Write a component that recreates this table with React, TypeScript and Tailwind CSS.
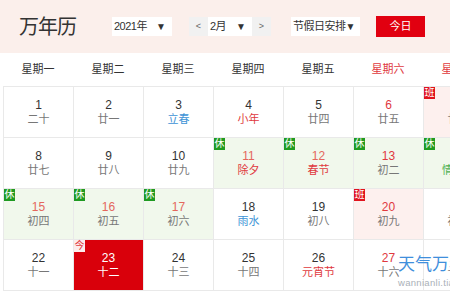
import React from "react";

type Day = {
  n: number | string;
  lunar: string;
  numColor?: string;
  lunarColor?: string;
  bg?: string;
  badge?: "休" | "班" | "今";
  today?: boolean;
};

const RED = "text-[#e0393e]";
const BLUE = "text-[#3d93d6]";
const GRAY = "text-[#777]";
const SOFTRED = "text-[#e4675d]";
const GREENBG = "bg-[#f1f8ec]";
const PINKBG = "bg-[#fdf0ee]";

const weeks: Day[][] = [
  [
    { n: 1, lunar: "二十" },
    { n: 2, lunar: "廿一" },
    { n: 3, lunar: "立春", lunarColor: BLUE },
    { n: 4, lunar: "小年", lunarColor: RED },
    { n: 5, lunar: "廿四" },
    { n: 6, lunar: "廿五", numColor: RED },
    { n: 7, lunar: "廿六", numColor: RED, bg: PINKBG, badge: "班" },
  ],
  [
    { n: 8, lunar: "廿七" },
    { n: 9, lunar: "廿八" },
    { n: 10, lunar: "廿九" },
    { n: 11, lunar: "除夕", numColor: SOFTRED, lunarColor: RED, bg: GREENBG, badge: "休" },
    { n: 12, lunar: "春节", numColor: SOFTRED, lunarColor: RED, bg: GREENBG, badge: "休" },
    { n: 13, lunar: "初二", numColor: RED, bg: GREENBG, badge: "休" },
    { n: 14, lunar: "情人节", numColor: RED, lunarColor: "text-[#4caf50]", bg: GREENBG, badge: "休" },
  ],
  [
    { n: 15, lunar: "初四", numColor: SOFTRED, bg: GREENBG, badge: "休" },
    { n: 16, lunar: "初五", numColor: SOFTRED, bg: GREENBG, badge: "休" },
    { n: 17, lunar: "初六", numColor: SOFTRED, bg: GREENBG, badge: "休" },
    { n: 18, lunar: "雨水", lunarColor: BLUE },
    { n: 19, lunar: "初八" },
    { n: 20, lunar: "初九", numColor: RED, bg: PINKBG, badge: "班" },
    { n: 21, lunar: "初十", numColor: RED },
  ],
  [
    { n: 22, lunar: "十一" },
    { n: 23, lunar: "十二", today: true, badge: "今" },
    { n: 24, lunar: "十三" },
    { n: 25, lunar: "十四" },
    { n: 26, lunar: "元宵节", lunarColor: RED },
    { n: 27, lunar: "十六", numColor: RED },
    { n: 28, lunar: "十七", numColor: RED },
  ],
];

const weekdays = ["星期一", "星期二", "星期三", "星期四", "星期五", "星期六", "星期日"];

const Badge: React.FC<{ kind: "休" | "班" | "今" }> = ({ kind }) => {
  const cls =
    kind === "休"
      ? "bg-[#1f9a22] text-white"
      : kind === "班"
      ? "bg-[#e0141e] text-white"
      : "bg-[#fdecec] text-[#e0393e]";
  return (
    <span
      className={`absolute left-0 top-0 w-[11px] h-[12px] flex items-center justify-center text-[10px] leading-none ${cls}`}
    >
      {kind}
    </span>
  );
};

const Cell: React.FC<{ d: Day }> = ({ d }) => {
  const bg = d.today ? "bg-[#d9000b]" : d.bg ?? "bg-white";
  const num = d.today ? "text-white" : d.numColor ?? "text-[#333]";
  const lunar = d.today ? "text-white" : d.lunarColor ?? GRAY;
  return (
    <div
      className={`relative h-[51px] border-r border-b border-[#e9e9e9] flex flex-col items-center justify-center ${bg}`}
    >
      {d.badge && <Badge kind={d.badge} />}
      <span className={`text-[12px] leading-[14px] ${num}`}>{d.n}</span>
      <span className={`text-[11px] leading-[15px] whitespace-nowrap ${lunar}`}>{d.lunar}</span>
    </div>
  );
};

const Select: React.FC<{ label: string; w: string }> = ({ label, w }) => (
  <div
    className={`h-[19px] bg-white flex items-center justify-between pl-[2px] pr-[6px] text-[11px] text-[#333] whitespace-nowrap ${w}`}
  >
    <span className="tracking-[-0.5px]">{label}</span>
    <span className="text-[10px]">▼</span>
  </div>
);

export default function App() {
  return (
    <div
      className="relative w-[450px] h-[296px] overflow-hidden bg-white"
      style={{ fontFamily: '"Liberation Sans", "Noto Sans CJK SC", sans-serif' }}
    >
      <div className="h-[53px] bg-[#fbefeb] flex items-center pl-[19px]">
        <h1 className="text-[20px] text-[#333] tracking-[-1px] w-[93px]">万年历</h1>
        <Select label="2021年" w="w-[60px]" />
        <div className="flex ml-[17px]">
          <div className="w-[19px] h-[19px] bg-[#f1f1f1] flex items-center justify-center text-[9px] text-[#666]">&lt;</div>
          <Select label="2月" w="w-[44px]" />
          <div className="w-[19px] h-[19px] bg-[#f1f1f1] flex items-center justify-center text-[9px] text-[#666]">&gt;</div>
        </div>
        <div className="ml-[20px]">
          <Select label="节假日安排" w="w-[69px] text-[10.5px] pr-[4px]" />
        </div>
        <button className="ml-[16px] w-[49px] h-[21px] bg-[#e10010] text-white text-[11px] flex items-center justify-center">
          今日
        </button>
      </div>

      <div className="ml-[3px] grid grid-cols-[repeat(7,70px)] h-[33px] items-center">
        {weekdays.map((w, i) => (
          <div
            key={w}
            className={`text-center text-[11px] whitespace-nowrap ${i >= 5 ? "text-[#e0393e]" : "text-[#333]"}`}
          >
            {w}
          </div>
        ))}
      </div>

      <div className="ml-[3px] grid grid-cols-[repeat(7,70px)] border-l border-t border-[#e9e9e9]">
        {weeks.flat().map((d) => (
          <Cell key={d.n} d={d} />
        ))}
      </div>

      <div className="absolute left-[398px] top-[256px] flex flex-col leading-none">
        <span className="text-[17px] text-[#3f8fdc] whitespace-nowrap">天气万年历</span>
        <span className="text-[9.5px] text-[#aab1b8] mt-[5px] tracking-[0.3px] whitespace-nowrap">wannianli.tianqi.com</span>
      </div>
    </div>
  );
}
